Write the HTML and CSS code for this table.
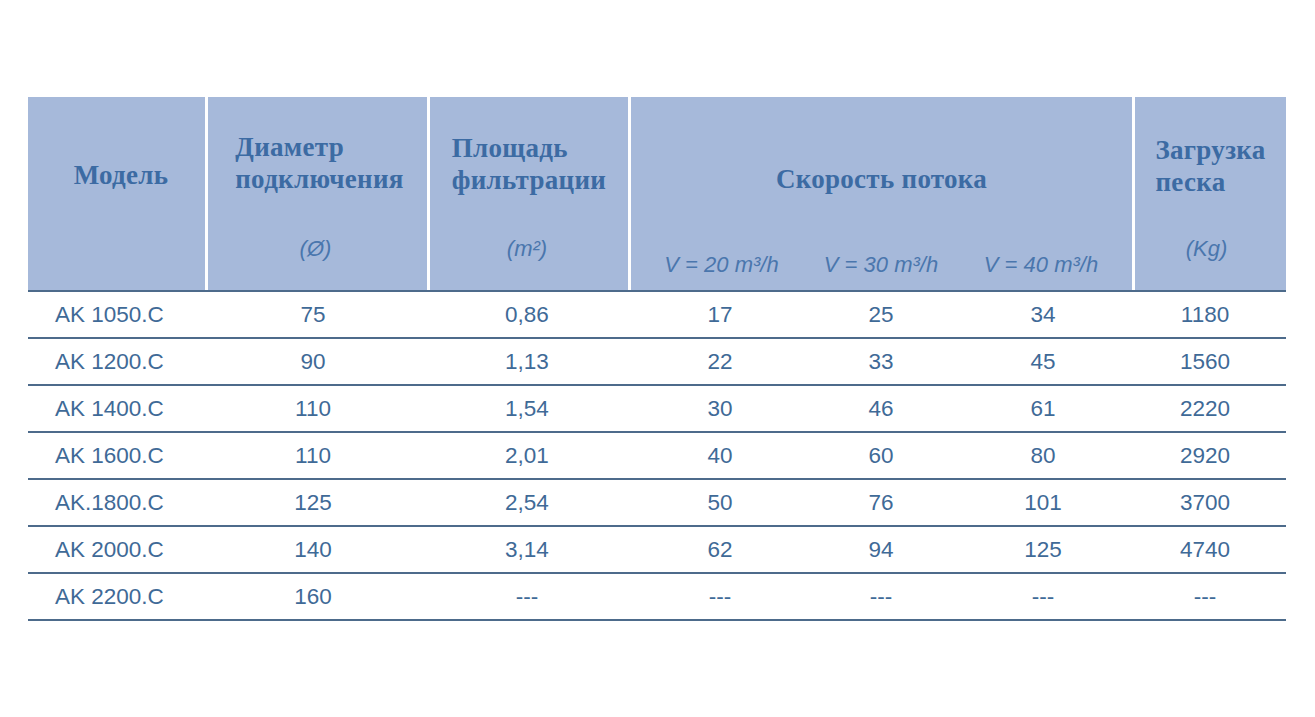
FILE: index.html
```html
<!DOCTYPE html>
<html lang="ru">
<head>
<meta charset="utf-8">
<title>Таблица</title>
<link rel="stylesheet" href="styles.css">
</head>
<body>
<div class="table">
  <div class="head">
    <div class="hcell h-model"><div class="title">Модель</div></div>
    <div class="hcell h-two"><div class="block"><div class="title">Диаметр<br>подключения</div><div class="unit">(Ø)</div></div></div>
    <div class="hcell h-three"><div class="block"><div class="title">Площадь<br>фильтрации</div><div class="unit">(m²)</div></div></div>
    <div class="hcell h-speed">
      <div class="title">Скорость потока</div>
      <div class="subs"><span>V = 20 m³/h</span><span>V = 30 m³/h</span><span>V = 40 m³/h</span></div>
    </div>
    <div class="hcell h-sand"><div class="block"><div class="title">Загрузка<br>песка</div><div class="unit">(Kg)</div></div></div>
  </div>
  <div class="row"><span class="model">AK 1050.C</span><span>75</span><span>0,86</span><span>17</span><span>25</span><span>34</span><span>1180</span><span></span></div>
  <div class="row"><span class="model">AK 1200.C</span><span>90</span><span>1,13</span><span>22</span><span>33</span><span>45</span><span>1560</span><span></span></div>
  <div class="row"><span class="model">AK 1400.C</span><span>110</span><span>1,54</span><span>30</span><span>46</span><span>61</span><span>2220</span><span></span></div>
  <div class="row"><span class="model">AK 1600.C</span><span>110</span><span>2,01</span><span>40</span><span>60</span><span>80</span><span>2920</span><span></span></div>
  <div class="row"><span class="model">AK.1800.C</span><span>125</span><span>2,54</span><span>50</span><span>76</span><span>101</span><span>3700</span><span></span></div>
  <div class="row"><span class="model">AK 2000.C</span><span>140</span><span>3,14</span><span>62</span><span>94</span><span>125</span><span>4740</span><span></span></div>
  <div class="row"><span class="model">AK 2200.C</span><span>160</span><span>---</span><span>---</span><span>---</span><span>---</span><span>---</span><span></span></div>
</div>
</body>
</html>
```
FILE: styles.css
```css
html, body {
  margin: 0;
  padding: 0;
  background: #ffffff;
}
body {
  padding: 97px 0 0 28px;
  width: 1315px;
  height: 717px;
  box-sizing: border-box;
  overflow: hidden;
}
.table {
  width: 1258px;
}
.head {
  display: grid;
  grid-template-columns: 177px 219px 198px 501px 151px;
  column-gap: 3px;
  height: 193px;
  border-bottom: 2px solid #4d6b8b;
}
.hcell {
  background: #a6b9da;
  display: flex;
  flex-direction: column;
  align-items: center;
  box-sizing: border-box;
}
.title {
  font-family: "Liberation Serif", "Times New Roman", serif;
  font-weight: bold;
  font-size: 27px;
  letter-spacing: 0.3px;
  line-height: 32px;
  color: #3c6ba3;
  text-align: left;
  white-space: nowrap;
}
.block {
  display: flex;
  flex-direction: column;
  align-items: center;
}
.block .title {
  align-self: flex-start;
}
.unit, .subs span {
  font-family: "Liberation Sans", Arial, sans-serif;
  font-style: italic;
  font-size: 22px;
  line-height: 24px;
  color: #4a76ad;
  white-space: nowrap;
}
.unit {
  margin-right: 8px;
}
.h-model { padding-top: 62px; padding-left: 9px; }
.h-two { padding-top: 34px; padding-left: 4px; }
.h-two .unit { margin-top: 42px; }
.h-three { padding-top: 35px; }
.h-three .unit { margin-top: 41px; margin-right: 4px; }
.h-sand { padding-top: 37px; }
.h-sand .unit { margin-top: 39px; }
.h-speed { padding-top: 66px; }
.subs {
  margin-top: 58px;
  width: 100%;
  display: grid;
  grid-template-columns: 181px 138px 182px;
  justify-items: center;
}
.row {
  display: grid;
  grid-template-columns: 172px 226px 202px 184px 138px 186px 138px 12px;
  height: 45px;
  align-items: center;
  justify-items: center;
  border-bottom: 2px solid #4d6b8b;
  font-family: "Liberation Sans", Arial, sans-serif;
  font-size: 22.5px;
  color: #3f6a97;
}
.row .model {
  justify-self: start;
  padding-left: 27px;
}
```
